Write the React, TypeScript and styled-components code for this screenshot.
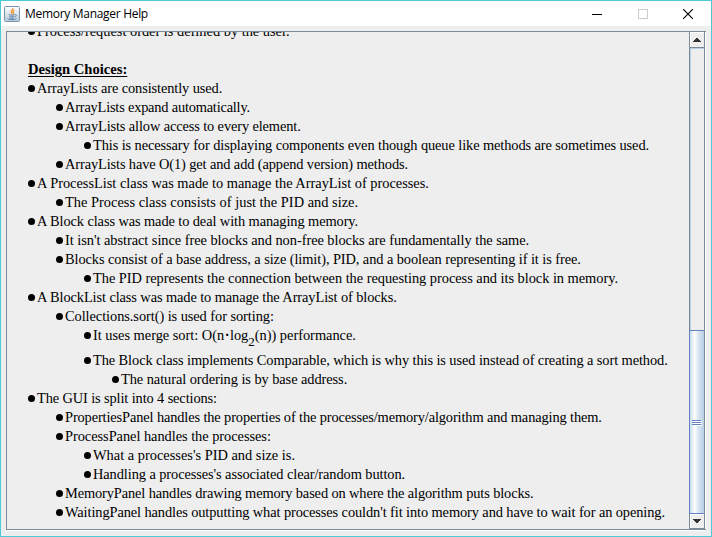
import React from "react";
import styled, { createGlobalStyle } from "styled-components";

const GlobalStyle = createGlobalStyle`
  *, *::before, *::after { box-sizing: border-box; }
  html, body { margin: 0; padding: 0; overflow: hidden; }
`;

const Window = styled.div`
  width: 712px;
  height: 537px;
  display: flex;
  flex-direction: column;
  border: 1px solid #4ccad5;
  background: #eeeeee;
  color: #000;
`;

const TitleBar = styled.header`
  height: 25px;
  flex: none;
  display: flex;
  align-items: center;
  padding-left: 3px;
  background: #fff;
`;

const Title = styled.h1<{ $tracking: number }>`
  flex: 1;
  margin: 0 0 0 5px;
  font: 400 12px/25px "Open Sans", "Noto Sans", sans-serif;
  letter-spacing: ${(p) => p.$tracking}px;
  white-space: nowrap;
`;

const WindowButton = styled.button<{ $width: number }>`
  width: ${(p) => p.$width}px;
  height: 25px;
  padding: 0;
  border: 0;
  background: none;
  display: flex;
  align-items: center;
  justify-content: center;
`;

const ScrollPane = styled.main`
  flex: 1;
  min-height: 0;
  margin: 5px 5px 6px 5px;
  display: flex;
  border: 1px solid #7a8a99;
  border-right: 0;
  box-shadow: 0 1px 0 #fff;
`;

const Viewport = styled.div`
  flex: 1;
  min-width: 0;
  overflow: hidden;
`;

const Document = styled.article`
  margin-top: -10px;
  padding-left: 21px;
  font: 400 14.4px/19px "Liberation Serif", "Times New Roman", serif;
  white-space: nowrap;
`;

const Row = styled.div<{ $level: number; $tall?: boolean }>`
  height: ${(p) => (p.$tall ? 25 : 19)}px;
  padding-left: ${(p) => p.$level * 28}px;
  display: flex;
`;

const Bullet = styled.span`
  flex: none;
  width: 7px;
  height: 7px;
  margin: 6px 2px 0 0;
  border-radius: 50%;
  background: #000;
`;

const RowText = styled.span<{ $tracking: number }>`
  letter-spacing: ${(p) => p.$tracking}px;
`;

const Heading = styled.h2`
  height: 19px;
  margin: 19px 0 0;
  font: inherit;
  font-size: 14.6px;
  font-weight: 700;
  text-decoration: underline;
  text-decoration-thickness: 1px;
  text-underline-offset: 2px;
`;

const Dot = styled.span`
  font-weight: 700;
  padding: 0 0.5px;
`;

const Sub = styled.sub`
  font-size: 13px;
  line-height: 0;
  vertical-align: -6px;
`;

const ScrollBar = styled.div`
  width: 17px;
  flex: none;
  display: flex;
  flex-direction: column;
  border-left: 1px solid #7a8a99;
  border-right: 1px solid #fff;
`;

const ArrowButton = styled.button<{ $down?: boolean }>`
  height: ${(p) => (p.$down ? 15 : 16)}px;
  flex: none;
  padding: 0;
  display: flex;
  align-items: center;
  justify-content: center;
  background: #eee;
  border: 0 solid #7a8a99;
  border-right-width: 1px;
  border-bottom-width: 1px;
  box-shadow: inset 1px 1px 0 #fff;
`;

const Track = styled.div`
  flex: 1;
  display: flex;
  flex-direction: column;
  justify-content: flex-end;
  background: #eee;
  border-right: 1px solid #7a8a99;
  box-shadow: inset 1px 1px 0 #b8cfe5;
`;

const Thumb = styled.div`
  height: 184px;
  margin: 0 -1px 0 -1px;
  display: flex;
  align-items: center;
  justify-content: center;
  border: 1px solid #6382bf;
  border-right-color: #7a8a99;
  background: linear-gradient(90deg, #c8dbee 0, #dfeaf5 15%, #fff 32%, #fff 36%, #dce8f3 55%, #b8cfe5 100%);
`;

const Grip = styled.svg`
  display: block;
  margin-top: 2px;
`;

type Line = { level: number; text: React.ReactNode; tracking?: number; tall?: boolean };

const lines: Line[] = [
  { level: 0, tracking: -0.106, text: "ArrayLists are consistently used." },
  { level: 1, tracking: -0.2, text: "ArrayLists expand automatically." },
  { level: 1, tracking: -0.12, text: "ArrayLists allow access to every element." },
  { level: 2, tracking: -0.097, text: "This is necessary for displaying components even though queue like methods are sometimes used." },
  { level: 1, tracking: -0.116, text: "ArrayLists have O(1) get and add (append version) methods." },
  { level: 0, tracking: -0.015, text: "A ProcessList class was made to manage the ArrayList of processes." },
  { level: 1, tracking: 0.01, text: "The Process class consists of just the PID and size." },
  { level: 0, tracking: -0.096, text: "A Block class was made to deal with managing memory." },
  { level: 1, tracking: -0.048, text: "It isn't abstract since free blocks and non-free blocks are fundamentally the same." },
  { level: 1, tracking: -0.085, text: "Blocks consist of a base address, a size (limit), PID, and a boolean representing if it is free." },
  { level: 2, tracking: -0.036, text: "The PID represents the connection between the requesting process and its block in memory." },
  { level: 0, tracking: -0.098, text: "A BlockList class was made to manage the ArrayList of blocks." },
  { level: 1, tracking: -0.067, text: "Collections.sort() is used for sorting:" },
  { level: 2, tracking: -0.02, tall: true, text: <>It uses merge sort: O(n<Dot>·</Dot>log<Sub>2</Sub>(n)) performance.</> },
  { level: 2, tracking: -0.089, text: "The Block class implements Comparable, which is why this is used instead of creating a sort method." },
  { level: 3, tracking: -0.07, text: "The natural ordering is by base address." },
  { level: 0, tracking: -0.12, text: "The GUI is split into 4 sections:" },
  { level: 1, tracking: -0.127, text: "PropertiesPanel handles the properties of the processes/memory/algorithm and managing them." },
  { level: 1, tracking: -0.045, text: "ProcessPanel handles the processes:" },
  { level: 2, tracking: 0, text: "What a processes's PID and size is." },
  { level: 2, tracking: -0.085, text: "Handling a processes's associated clear/random button." },
  { level: 1, tracking: -0.12, text: "MemoryPanel handles drawing memory based on where the algorithm puts blocks." },
  { level: 1, tracking: -0.102, text: "WaitingPanel handles outputting what processes couldn't fit into memory and have to wait for an opening." },
];

const BulletRow = ({ level, text, tracking = 0, tall }: Line) => (
  <Row $level={level} $tall={tall}>
    <Bullet />
    <RowText $tracking={tracking}>{text}</RowText>
  </Row>
);

const JavaIcon = () => (
  <svg width="16" height="16" viewBox="0 0 16 16">
    <defs>
      <linearGradient id="tile" x1="0" y1="0" x2="0" y2="1">
        <stop offset="0" stopColor="#fff" />
        <stop offset="1" stopColor="#b9c9d8" />
      </linearGradient>
    </defs>
    <rect x=".5" y=".5" width="15" height="15" rx="1" fill="url(#tile)" stroke="#7893ad" />
    <path d="M8.8 2c1 1.8-2.7 2.7-1.5 4.3.5.8 1 1.2.6 2M10.5 4.2C8.8 5 8.8 5.8 9.4 6.6c.3.5 0 1-.4 1.3" fill="none" stroke="#ef8a25" strokeWidth="1.2" />
    <path d="M4.7 8.7c1.5.6 4.5.6 6 0M11 8.8c2-.4 1.8 1.7-.2 2M5.3 10.5c1.5.5 3.6.5 5 0M5.8 12c1.3.4 3 .4 4 0M3.5 12.4c1 1.5 7.5 1.5 9 .2" fill="none" stroke="#4d7ba5" strokeWidth=".9" />
  </svg>
);

const Arrow = ({ down }: { down?: boolean }) => (
  <svg width="8" height="4" viewBox="0 0 8 4" shapeRendering="crispEdges">
    <path d={down ? "M0 0h8v1h-1v1h-1v1h-1v1h-2v-1h-1v-1h-1v-1h-1z" : "M3 0h2v1h1v1h1v1h1v1h-8v-1h1v-1h1v-1h1z"} fill="#333" />
  </svg>
);

export default function App() {
  return (
    <>
      <GlobalStyle />
      <Window>
        <TitleBar>
          <JavaIcon />
          <Title $tracking={-0.3}>Memory Manager Help</Title>
          <WindowButton $width={46} aria-label="Minimize">
            <svg width="10" height="10" shapeRendering="crispEdges"><path d="M0 5h10v1H0z" /></svg>
          </WindowButton>
          <WindowButton $width={45} aria-label="Maximize">
            <svg width="10" height="10"><rect x=".5" y=".5" width="9" height="9" fill="none" stroke="#ccc" /></svg>
          </WindowButton>
          <WindowButton $width={46} aria-label="Close">
            <svg width="10" height="10"><path d="M0 0l10 10M10 0L0 10" stroke="#000" strokeWidth="1.1" /></svg>
          </WindowButton>
        </TitleBar>
        <ScrollPane>
          <Viewport>
            <Document>
              <BulletRow level={0} tracking={-0.01} text="Process/request order is defined by the user." />
              <Heading>Design Choices:</Heading>
              {lines.map((line, i) => <BulletRow key={i} {...line} />)}
            </Document>
          </Viewport>
          <ScrollBar>
            <ArrowButton aria-label="Scroll up"><Arrow /></ArrowButton>
            <Track>
              <Thumb>
                <Grip width="10" height="6" shapeRendering="crispEdges">
                  <path d="M1 1h9v1H1zM1 3h9v1H1zM1 5h9v1H1z" fill="#fff" />
                  <path d="M0 0h9v1H0zM0 2h9v1H0zM0 4h9v1H0z" fill="#6382bf" />
                </Grip>
              </Thumb>
            </Track>
            <ArrowButton $down aria-label="Scroll down"><Arrow down /></ArrowButton>
          </ScrollBar>
        </ScrollPane>
      </Window>
    </>
  );
}
